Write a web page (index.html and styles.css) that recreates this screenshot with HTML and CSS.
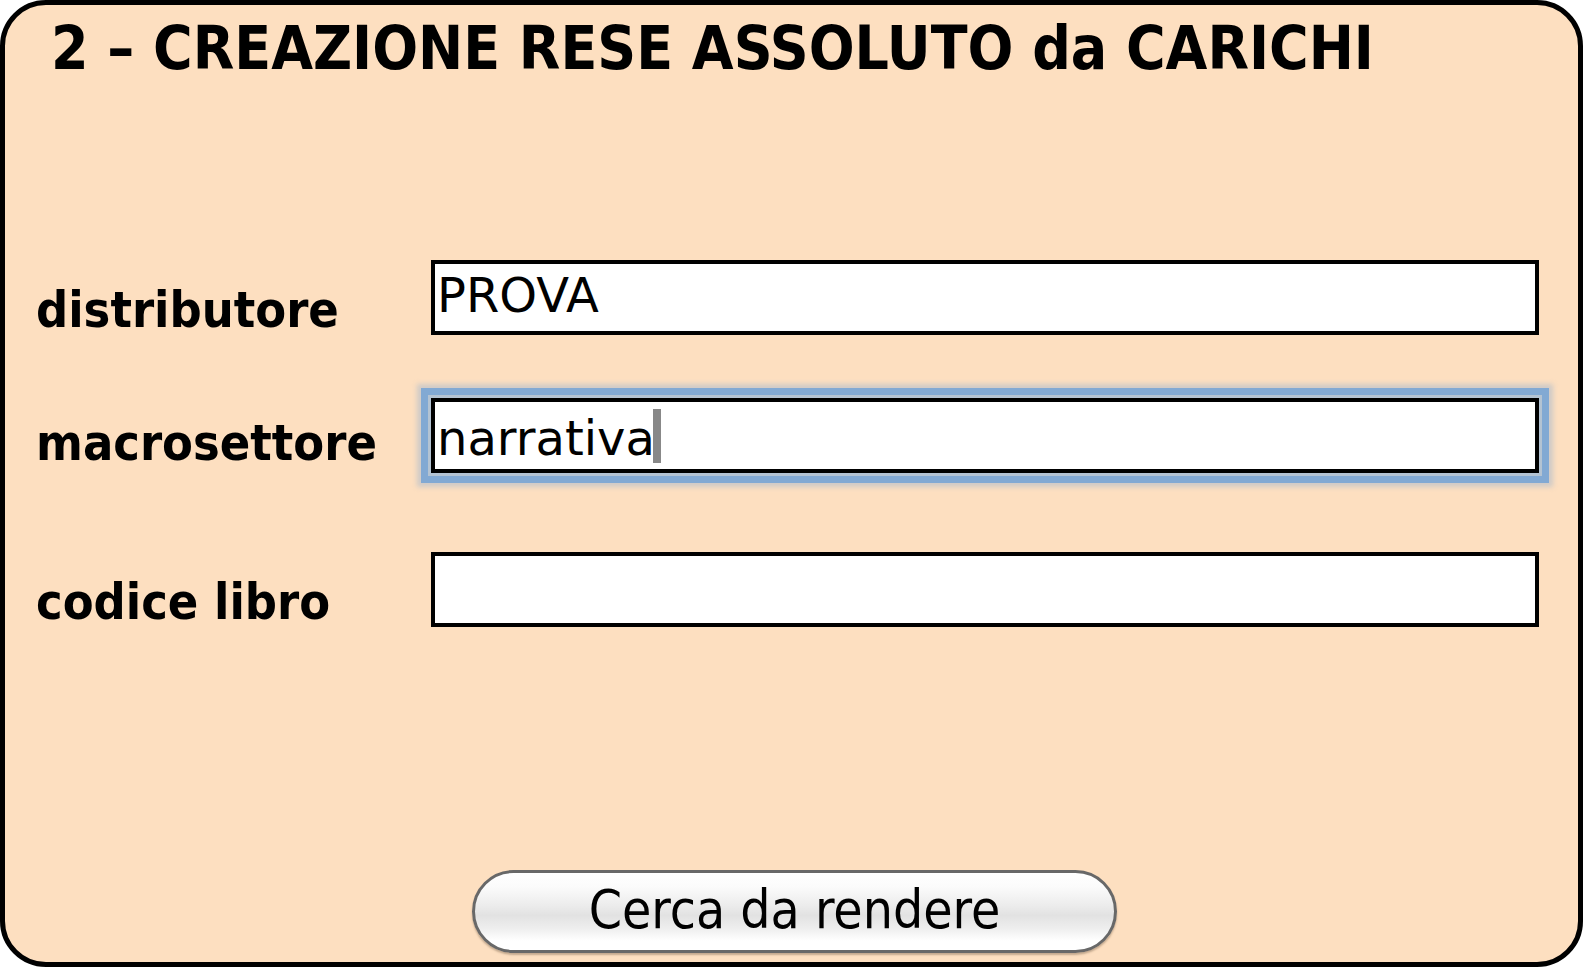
FILE: index.html
```html
<!DOCTYPE html>
<html lang="it">
<head>
    <meta charset="UTF-8">
    <meta name="viewport" content="width=device-width, initial-scale=1.0">
    <title>Creazione rese assoluto da carichi</title>
    <link rel="stylesheet" href="styles.css">
</head>
<body>
    <div class="panel">
        <h1 class="title">2 – CREAZIONE RESE ASSOLUTO da CARICHI</h1>
        <div class="form">
            <div class="row row-first">
                <div class="label">distributore</div>
                <div class="field">PROVA</div>
            </div>
            <div class="row row-focus">
                <div class="label">macrosettore</div>
                <div class="field focused">narrativa<span class="caret"></span></div>
            </div>
            <div class="row row-last">
                <div class="label">codice libro</div>
                <div class="field"></div>
            </div>
        </div>
        <button class="search-btn">Cerca da rendere</button>
    </div>
</body>
</html>
```

FILE: styles.css
```css
html, body {
    margin: 0;
    padding: 0;
    background: #ffffff;
}
body {
    font-family: "DejaVu Sans", Verdana, sans-serif;
    color: #000;
}
.panel {
    box-sizing: border-box;
    width: 100vw;
    height: 100vh;
    border: 5px solid #000;
    border-radius: 46px;
    background-color: #fddfc0;
    padding: 13px 39px 9px 31px;
    display: flex;
    flex-direction: column;
}
.title {
    margin: 0 0 0 15px;
    font-size: 60px;
    line-height: 1;
    font-weight: bold;
    font-stretch: condensed;
    white-space: nowrap;
}
.form {
    margin-top: 182px;
    display: flex;
    flex-direction: column;
}
.row {
    display: flex;
    align-items: flex-end;
}
.row-focus {
    margin-top: 63px;
}
.row-focus .label {
    margin-bottom: 5px;
}
.row-last {
    margin-top: 79px;
}
.label {
    width: 395px;
    flex-shrink: 0;
    font-size: 50px;
    line-height: 1;
    font-weight: bold;
    font-stretch: condensed;
}
.field {
    flex: 1;
    box-sizing: border-box;
    height: 75px;
    border: 4px solid #000;
    background: #fff;
    padding: 7px 0 0 2px;
    font-size: 48px;
    line-height: 1;
    white-space: nowrap;
}
.focused {
    box-shadow: 0 0 0 3px #b4c3d2, 0 0 0 10px #82a9d3, 0 0 5px 14px rgba(150, 178, 208, 0.45);
}
.caret {
    display: inline-block;
    width: 8px;
    height: 54px;
    margin-left: -2px;
    background: #888;
    vertical-align: -8px;
}
.search-btn {
    margin: auto auto 0 auto;
    position: relative;
    left: 7px;
    width: 645px;
    height: 83px;
    border: 3px solid #686868;
    border-radius: 42px;
    background: linear-gradient(#ffffff 0%, #fbfbfb 18%, #ececec 42%, #e2e2e2 55%, #eeeeee 72%, #ffffff 88%, #ffffff 100%);
    box-shadow: 0 2px 2px rgba(90, 70, 50, 0.35);
    font-family: "DejaVu Sans", Verdana, sans-serif;
    font-stretch: condensed;
    font-size: 53px;
    line-height: 1;
    color: #000;
    padding: 0 0 4px 0;
    cursor: pointer;
}
```
